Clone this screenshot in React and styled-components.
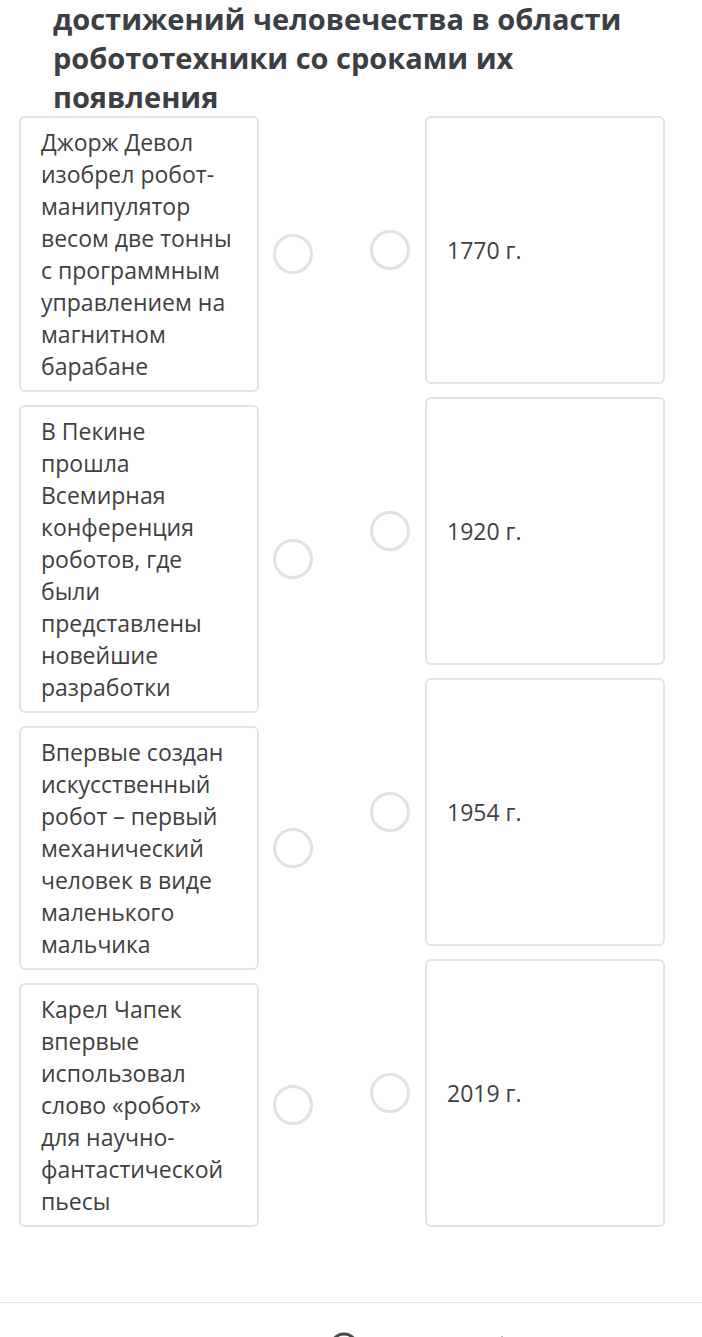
import styled, { createGlobalStyle } from 'styled-components';

const GlobalStyle = createGlobalStyle`
  body {
    margin: 0;
    background: #fff;
    font-family: "Open Sans", "Liberation Sans", sans-serif;
  }
`;

const Page = styled.div`
  width: 702px;
  overflow: hidden;
`;

const Title = styled.h1`
  margin: -1px 0 0 0;
  padding: 0 40px 0 53px;
  font-size: 29px;
  line-height: 39px;
  font-weight: 700;
  color: #3b3e43;
`;

const Board = styled.div`
  display: grid;
  grid-template-columns: 294px 295px;
  column-gap: 57px;
  padding-left: 19px;
`;

const Column = styled.div`
  display: flex;
  flex-direction: column;
  gap: 13px;
`;

const Item = styled.div`
  display: flex;
  align-items: center;
  gap: ${props => props.gap || 14}px;
  flex: ${props => props.grow ? 1 : 'none'};
`;

const Card = styled.div`
  box-sizing: border-box;
  width: 241px;
  border: 2px solid #e3e3e3;
  border-radius: 6px;
  padding: 8px 22px 8px 20px;
  font-size: 23px;
  line-height: 32px;
  color: #3f3f3f;
`;

const Option = styled(Card)`
  align-self: stretch;
  display: flex;
  align-items: center;
`;

const Radio = styled.div`
  box-sizing: border-box;
  width: 40px;
  height: 40px;
  flex: none;
  border-radius: 50%;
  border: 3px solid #dfe3e6;
`;

const Footer = styled.div`
  margin-top: 75px;
  border-top: 1px solid #e4e4e4;
  height: 70px;
  display: flex;
  padding-top: 29px;
  padding-left: 329px;
  gap: 136px;
`;

const events = [
  'Джорж Девол изобрел робот-манипулятор весом две тонны с программным управлением на магнитном барабане',
  'В Пекине прошла Всемирная конференция роботов, где были представлены новейшие разработки',
  'Впервые создан искусственный робот – первый механический человек в виде маленького мальчика',
  'Карел Чапек впервые использовал слово «робот» для научно-фантастической пьесы',
];

const years = ['1770 г.', '1920 г.', '1954 г.', '2019 г.'];

export default function App() {
  return (
    <Page>
      <GlobalStyle />
      <Title>
        достижений человечества в области робототехники со сроками их появления
      </Title>

      <Board>
        <Column>
          {events.map(text => (
            <Item key={text}>
              <Card>{text}</Card>
              <Radio />
            </Item>
          ))}
        </Column>

        <Column>
          {years.map(year => (
            <Item key={year} grow gap={15}>
              <Radio />
              <Option>{year}</Option>
            </Item>
          ))}
        </Column>
      </Board>

      <Footer>
        <svg width="30" height="30" viewBox="0 0 30 30">
          <circle cx="15" cy="15" r="13" fill="none" stroke="#4a4a4a" strokeWidth="3" />
        </svg>
        <svg width="14" height="14" viewBox="0 0 14 14">
          <rect x="6" y="4" width="2" height="8" fill="#bdbdbd" />
        </svg>
      </Footer>
    </Page>
  );
}
